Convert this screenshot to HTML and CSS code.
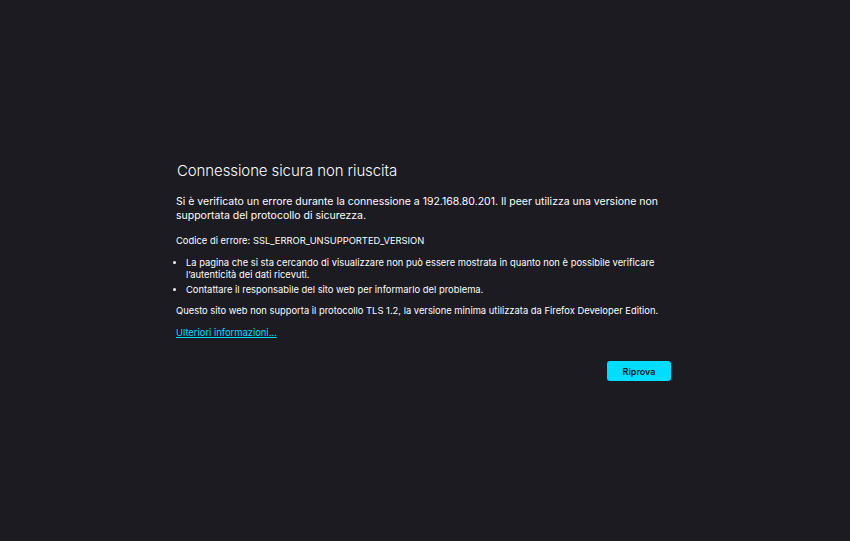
FILE: index.html
```html
<!DOCTYPE html>
<html lang="it">
<head>
<meta charset="utf-8">
<title>Connessione sicura non riuscita</title>
<link rel="stylesheet" href="styles.css">
</head>
<body>
<main class="container">
  <h1 class="title">Connessione sicura non riuscita</h1>
  <p class="intro">Si è verificato un errore durante la connessione a 192.168.80.201. Il peer utilizza una versione non supportata del protocollo di sicurezza.</p>
  <p class="code">Codice di errore: SSL_ERROR_UNSUPPORTED_VERSION</p>
  <ul class="list">
    <li>La pagina che si sta cercando di visualizzare non può essere mostrata in quanto non è possibile verificare l’autenticità dei dati ricevuti.</li>
    <li>Contattare il responsabile del sito web per informarlo del problema.</li>
  </ul>
  <p class="note">Questo sito web non supporta il protocollo TLS 1.2, la versione minima utilizzata da Firefox Developer Edition.</p>
  <p class="more"><a class="link" href="#">Ulteriori informazioni…</a></p>
  <div class="actions">
    <button class="btn">Riprova</button>
  </div>
</main>
</body>
</html>
```

FILE: styles.css
```css
html, body {
  margin: 0;
  padding: 0;
  height: 100%;
}
body {
  background: #1c1b22;
  color: #fbfbfe;
  font-family: Inter, "Noto Sans", "Liberation Sans", sans-serif;
  display: flex;
  align-items: center;
  justify-content: center;
}
.container {
  width: 498px;
  margin-top: 4px;
}
.title {
  font-size: 15px;
  font-weight: 300;
  line-height: 14px;
  margin: 0 0 17px 1px;
  letter-spacing: -0.1px;
}
.intro {
  font-size: 10.5px;
  line-height: 14.5px;
  margin: 0 0 11px 0;
}
.code {
  font-size: 9.4px;
  line-height: 12.5px;
  margin: 0 0 10px 0;
}
.list {
  font-size: 9.4px;
  line-height: 12px;
  margin: 0 0 9px 0;
  padding-left: 10px;
}
.list li {
  margin-bottom: 3px;
}
.list li:last-child {
  margin-bottom: 4px;
}
.note {
  font-size: 9.4px;
  line-height: 12.5px;
  margin: 0 0 9px 0;
}
.more {
  font-size: 9.4px;
  line-height: 12.5px;
  margin: 0;
}
.link {
  color: #00ddff;
  text-decoration: underline;
}
.actions {
  display: flex;
  justify-content: flex-end;
  margin-top: 22px;
  padding-right: 3px;
}
.btn {
  background: #00ddff;
  color: #15141a;
  border: none;
  border-radius: 3px;
  width: 64px;
  height: 20px;
  font-family: Inter, "Noto Sans", sans-serif;
  font-size: 9px;
  font-weight: 600;
  padding: 0;
}
```
